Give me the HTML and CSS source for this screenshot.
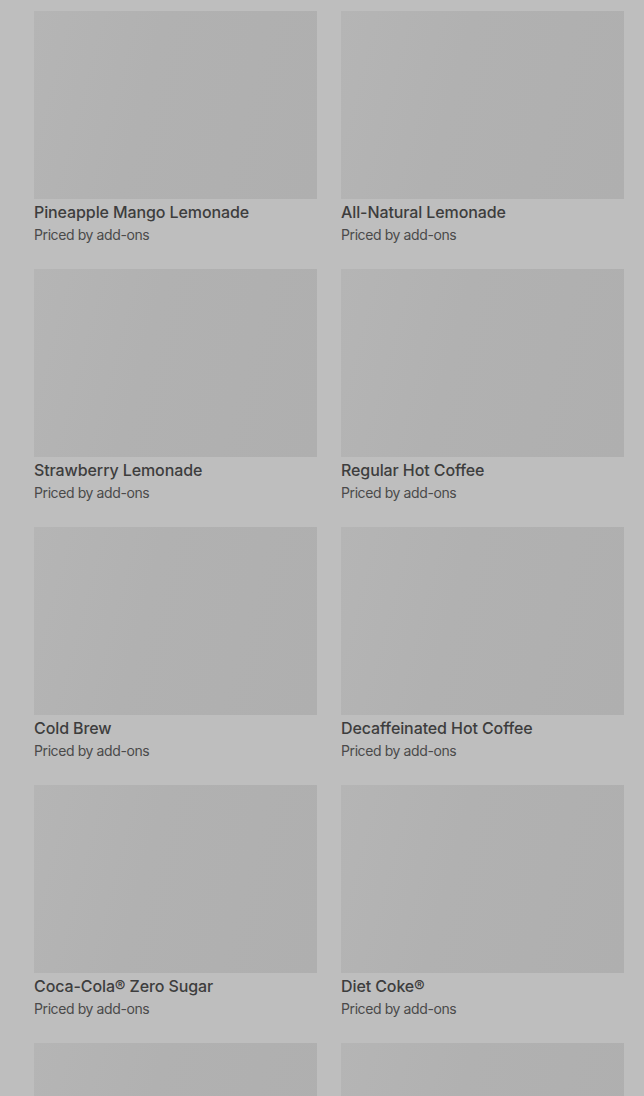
FILE: index.html
```html
<!DOCTYPE html>
<html lang="en">
<head>
  <meta charset="UTF-8">
  <title>Menu</title>
  <link rel="stylesheet" href="styles.css">
</head>
<body>
  <div class="menu-grid">
    <div class="item">
      <div class="thumb"></div>
      <div class="name">Pineapple Mango Lemonade</div>
      <div class="price">Priced by add-ons</div>
    </div>
    <div class="item">
      <div class="thumb"></div>
      <div class="name">All-Natural Lemonade</div>
      <div class="price">Priced by add-ons</div>
    </div>
    <div class="item">
      <div class="thumb"></div>
      <div class="name">Strawberry Lemonade</div>
      <div class="price">Priced by add-ons</div>
    </div>
    <div class="item">
      <div class="thumb"></div>
      <div class="name">Regular Hot Coffee</div>
      <div class="price">Priced by add-ons</div>
    </div>
    <div class="item">
      <div class="thumb"></div>
      <div class="name">Cold Brew</div>
      <div class="price">Priced by add-ons</div>
    </div>
    <div class="item">
      <div class="thumb"></div>
      <div class="name">Decaffeinated Hot Coffee</div>
      <div class="price">Priced by add-ons</div>
    </div>
    <div class="item">
      <div class="thumb"></div>
      <div class="name">Coca-Cola® Zero Sugar</div>
      <div class="price">Priced by add-ons</div>
    </div>
    <div class="item">
      <div class="thumb"></div>
      <div class="name">Diet Coke®</div>
      <div class="price">Priced by add-ons</div>
    </div>
    <div class="item">
      <div class="thumb"></div>
    </div>
    <div class="item">
      <div class="thumb"></div>
    </div>
  </div>
</body>
</html>
```

FILE: styles.css
```css
body { margin: 0; background-color: #bebebe; font-family: 'Inter', 'Liberation Sans', sans-serif; overflow: hidden; }
.menu-grid {
  display: grid; grid-template-columns: 283px 283px; column-gap: 24px; row-gap: 24px;
  padding: 11px 20px 0 34px;
}
.thumb {
  height: 188px;
  background: linear-gradient(105deg, #b5b5b5 0%, #b1b1b1 40%, #afafaf 100%);
}
.name { margin-top: 1px; font-size: 16px; line-height: 24px; font-weight: 500; letter-spacing: -0.1px; color: #3d3d3d; }
.price { font-size: 14px; line-height: 21px; letter-spacing: -0.4px; color: #4a4a4a; }
```
